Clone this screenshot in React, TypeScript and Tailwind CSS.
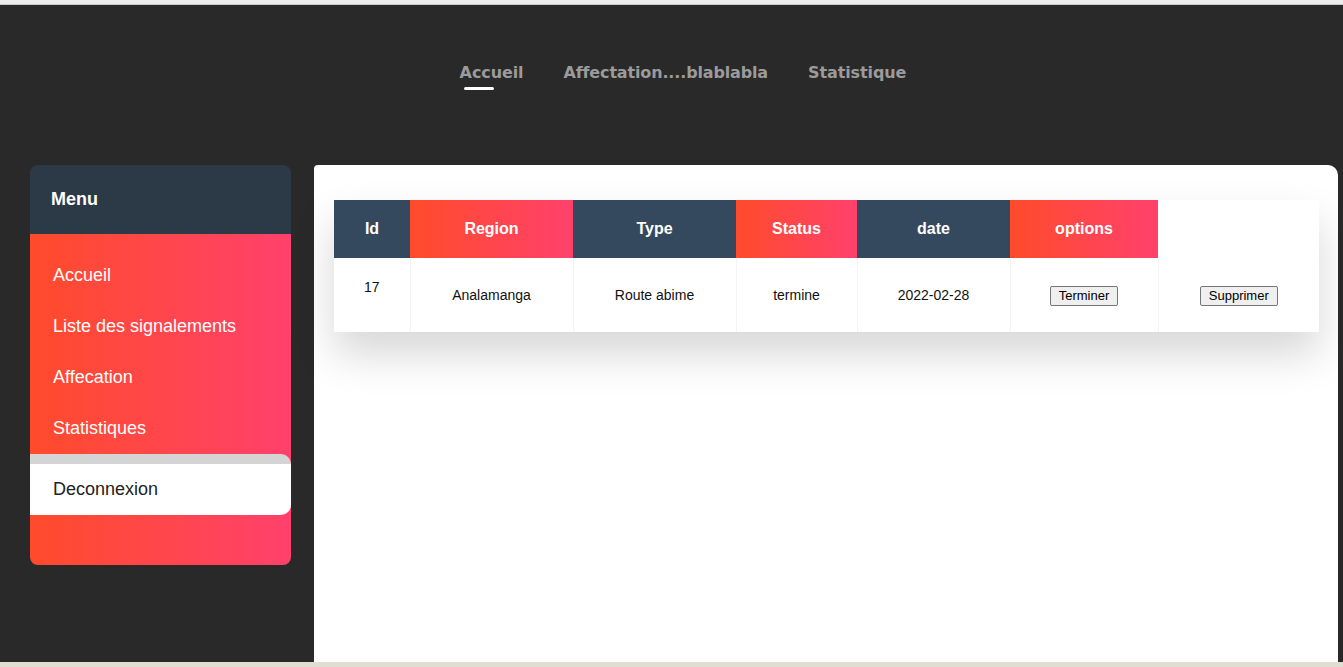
import React from "react";

const grad = "bg-[linear-gradient(to_right,#ff4b2b,#ff416c)]";

export default function App() {
  const items = ["Accueil", "Liste des signalements", "Affecation", "Statistiques"];
  return (
    <div className="w-[1343px] h-[667px] flex flex-col overflow-hidden font-['Liberation_Sans',Arial,sans-serif]">
      <div className="h-[4px] bg-[#ececec] border-b border-[#c9c9c9] box-content" />
      <div className="flex-1 bg-[#292929] flex flex-col min-h-0">
        <nav className="h-[160px] flex justify-center pl-[23px] pt-[58px] gap-[40px] font-['DejaVu_Sans',Verdana,sans-serif] font-bold text-[16px] text-[#9b9b9b]">
          <div className="flex flex-col items-start h-fit">
            <span className="leading-[20px] tracking-[-0.1px]">Accueil</span>
            <span className="mt-[4px] ml-[4px] w-[30px] h-[3px] bg-white rounded-sm" />
          </div>
          <span className="leading-[20px] tracking-[-0.15px]">Affectation....blablabla</span>
          <span className="leading-[20px] tracking-[-0.1px]">Statistique</span>
        </nav>
        <div className="flex flex-1 min-h-0 pl-[30px] pr-[5px] gap-[23px]">
          <aside className="w-[261px] h-[400px] rounded-[8px] overflow-hidden flex flex-col">
            <div className="h-[69px] bg-[#2c3a47] flex items-center pl-[21px] text-white font-bold text-[18px]">Menu</div>
            <div className={`flex-1 ${grad} flex flex-col pt-[16px]`}>
              {items.map((t) => (
                <div key={t} className="h-[51px] flex items-center pl-[23px] text-white text-[18px]">{t}</div>
              ))}
              <div className="h-[61px] bg-white border-t-[10px] border-[#d4d4d4] rounded-r-[10px] flex items-center pl-[23px] text-[#222] text-[18px]">
                Deconnexion
              </div>
            </div>
          </aside>
          <main className="flex-1 bg-white rounded-tr-[10px] rounded-tl-[4px] pt-[35px] pl-[20px] pr-[19px]">
            <table className="w-[985px] border-collapse bg-white shadow-[0_22px_40px_rgba(0,0,0,0.16)] text-center">
              <thead>
                <tr className="h-[58px] text-white font-bold text-[16px]">
                  <th className="w-[76px] bg-[#34495e]">Id</th>
                  <th className={`w-[163px] ${grad}`}>Region</th>
                  <th className="w-[163px] bg-[#34495e]">Type</th>
                  <th className={`w-[121px] ${grad}`}>Status</th>
                  <th className="w-[153px] bg-[#34495e]">date</th>
                  <th className={`w-[148px] ${grad}`}>options</th>
                  <th className="bg-white"></th>
                </tr>
              </thead>
              <tbody>
                <tr className="h-[74px] text-[14px] text-[#111]">
                  <td className="align-top pt-[19px] border-r border-[#f4f4f4]">17</td>
                  <td className="border-r border-[#f4f4f4]">Analamanga</td>
                  <td className="border-r border-[#f4f4f4]">Route abime</td>
                  <td className="border-r border-[#f4f4f4]">termine</td>
                  <td className="border-r border-[#f4f4f4]">2022-02-28</td>
                  <td className="border-r border-[#f4f4f4]">
                    <button className="bg-[#efefef] border border-[#767676] rounded-[2px] px-[8px] h-[20px] leading-[18px] text-[13px] text-black">Terminer</button>
                  </td>
                  <td>
                    <button className="bg-[#efefef] border border-[#767676] rounded-[2px] px-[8px] h-[20px] leading-[18px] text-[13px] text-black">Supprimer</button>
                  </td>
                </tr>
              </tbody>
            </table>
          </main>
        </div>
      </div>
      <div className="h-[5px] bg-[#e0ded4]" />
    </div>
  );
}
